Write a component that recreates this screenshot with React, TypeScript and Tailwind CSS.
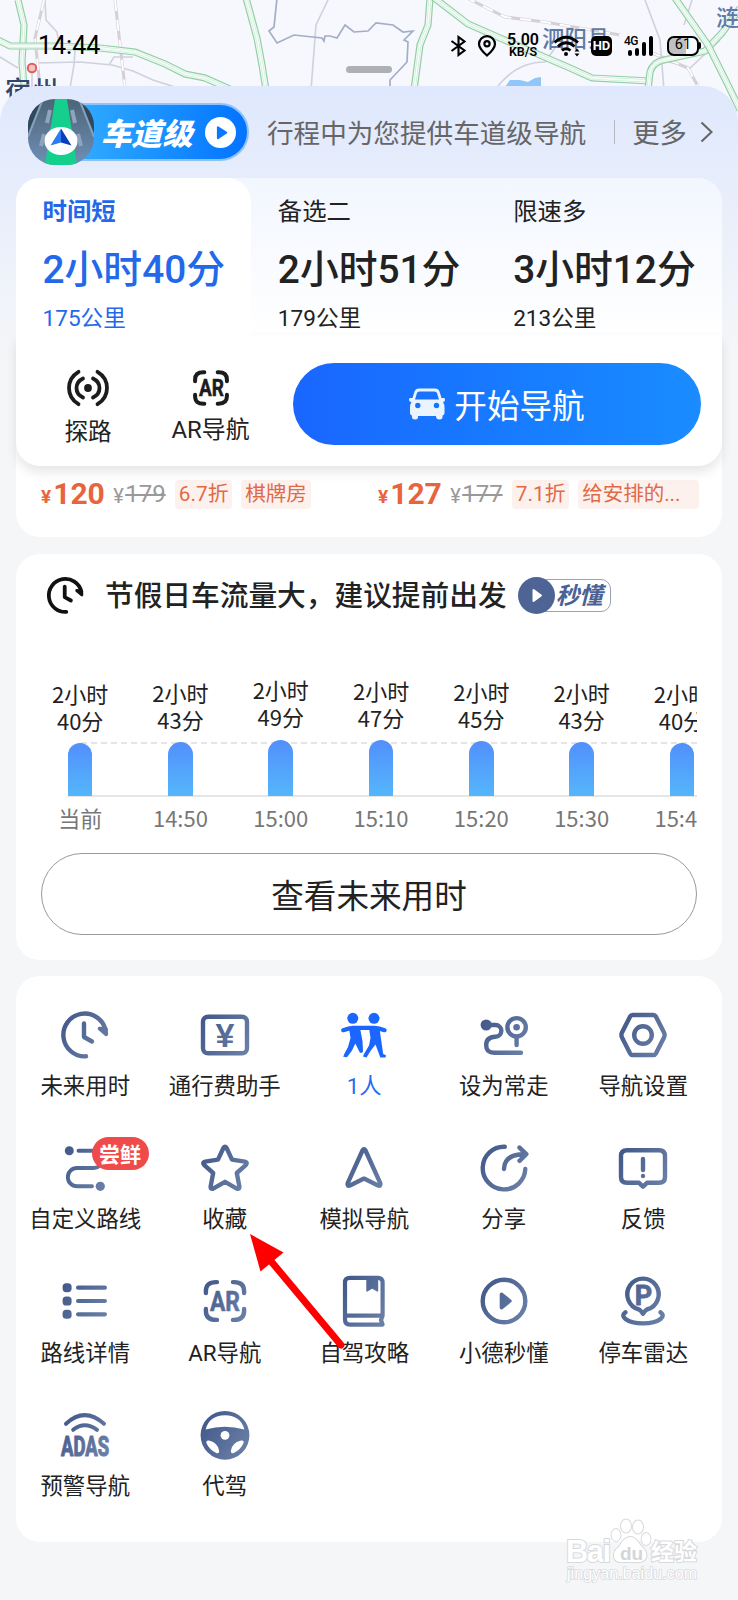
import { ReactNode } from "react";
import clsx from "clsx";

interface RouteOption {
  label: string;
  duration: string;
  distance: string;
}

interface ForecastItem {
  minutes: string;
  time: string;
  height: number;
}

interface ToolItem {
  label: string;
  icon: ReactNode;
  badge?: string;
  active?: boolean;
}

const routes: RouteOption[] = [
  { label: "时间短", duration: "2小时40分", distance: "175公里" },
  { label: "备选二", duration: "2小时51分", distance: "179公里" },
  { label: "限速多", duration: "3小时12分", distance: "213公里" },
];

const forecast: ForecastItem[] = [
  { minutes: "40分", time: "当前", height: 53 },
  { minutes: "43分", time: "14:50", height: 54 },
  { minutes: "49分", time: "15:00", height: 56.5 },
  { minutes: "47分", time: "15:10", height: 56 },
  { minutes: "45分", time: "15:20", height: 55 },
  { minutes: "43分", time: "15:30", height: 54 },
  { minutes: "40分", time: "15:40", height: 53 },
];

const INK = "url(#ink)";

function Glyph({ children, fill }: { children: ReactNode; fill?: boolean }) {
  return (
    <svg
      width="48"
      height="48"
      viewBox="0 0 48 48"
      className="overflow-visible"
      fill={fill ? INK : "none"}
      stroke={fill ? "none" : INK}
      strokeWidth="4.4"
      strokeLinecap="round"
      strokeLinejoin="round"
    >
      {children}
    </svg>
  );
}

function ClockPaths({ color }: { color: string }) {
  return (
    <>
      <path d="M25 45.3A21.4 21.4 0 1 1 44.6 19" />
      <path d="M38.6 17.6 45.2 23.2 44.8 18Z" fill={color} strokeWidth="3.8" />
      <path d="M23 12.5V26L31 30.5" />
    </>
  );
}

function ArFrame() {
  return (
    <path d="M4.9 16V14Q4.9 5.1 15 5.1H16M32 5.1H33Q43.1 5.1 43.1 14V16M43.1 32V34Q43.1 42.9 33 42.9H32M16 42.9H15Q4.9 42.9 4.9 34V32" />
  );
}

const tools: ToolItem[] = [
  {
    label: "未来用时",
    icon: (
      <Glyph>
        <ClockPaths color={INK} />
      </Glyph>
    ),
  },
  {
    label: "通行费助手",
    icon: (
      <Glyph>
        <rect x="2" y="5.7" width="44" height="36.6" rx="5" />
        <text
          x="24"
          y="36"
          textAnchor="middle"
          fill={INK}
          stroke="none"
          className="font-['Liberation_Sans'] text-[34px] font-bold"
        >
          ¥
        </text>
      </Glyph>
    ),
  },
  {
    label: "1人",
    active: true,
    icon: (
      <svg width="48" height="48" viewBox="0 0 48 48" fill="#1a66ff">
        <circle cx="12.8" cy="7.3" r="5.5" />
        <circle cx="34" cy="7.3" r="5.5" />
        <path
          d="M3.2 19.2Q9 17.2 13 16.8H34.5Q39 17.2 44.600 19.200"
          fill="none"
          stroke="#1a66ff"
          strokeWidth="4.2"
          strokeLinecap="round"
        />
        <path d="M9 17H20L22.500 30 23 40.500Q21.500 43 19.500 41L15.300 32.500 12 39.500 7 46.300 3.200 45.700 4.300 43 8 36 10.500 27Z" />
        <path d="M29 17H39.500L41 28 43.200 43 46 44.300 45.500 46.500H40.300L35.500 33.500 30.500 40 26.500 46.500 23 45.500 24 43 29 34.500 30.500 27Z" />
      </svg>
    ),
  },
  {
    label: "设为常走",
    icon: (
      <Glyph>
        <circle cx="6.2" cy="14" r="5.6" fill={INK} stroke="none" />
        <path d="M7 14H15.5A5.8 5.8 0 0 1 15.5 25.7Q6.2 26 6.2 34T14.5 41.8H41" />
        <circle cx="36.6" cy="16.3" r="9.2" />
        <circle cx="36.6" cy="16.3" r="3.3" fill={INK} stroke="none" />
        <path d="M36.6 26V34" />
      </Glyph>
    ),
  },
  {
    label: "导航设置",
    icon: (
      <Glyph>
        <path d="M13.5 4H34.5Q36 4 37 5.7L45 21.5Q46.2 24 45 26.5L37 42.3Q36 44 34.5 44H13.5Q12 44 11 42.3L3 26.5Q1.8 24 3 21.5L11 5.7Q12 4 13.5 4Z" />
        <circle cx="24" cy="24" r="8.8" />
      </Glyph>
    ),
  },
  {
    label: "自定义路线",
    badge: "尝鲜",
    icon: (
      <Glyph>
        <circle cx="8.3" cy="6.7" r="4.5" fill={INK} stroke="none" />
        <path d="M17.5 6.7H33A8.6 8.6 0 0 1 33 24H16A9 9 0 0 0 16 42.3H31" strokeWidth="3.9" />
        <circle cx="39.3" cy="42.3" r="4.6" fill={INK} stroke="none" />
      </Glyph>
    ),
  },
  {
    label: "收藏",
    icon: (
      <Glyph>
        <path d="M22.4 4Q24 1.6 25.6 4L31 15.6 43.8 17.6Q47 18.4 45 20.8L35.8 29 38.4 42.6Q38.6 45.6 35.8 44.6L24 37.8 12.2 44.6Q9.4 45.6 9.6 42.6L12.2 29 3 20.8Q1 18.4 4.2 17.6L17 15.6Z" />
      </Glyph>
    ),
  },
  {
    label: "模拟导航",
    icon: (
      <Glyph>
        <path d="M22.5 6.5Q24 4 25.5 6.5L40.4 39.4Q41 42.6 38 41.4L24 34.6 10 41.4Q7 42.6 7.6 39.4Z" />
      </Glyph>
    ),
  },
  {
    label: "分享",
    icon: (
      <Glyph>
        <path d="M24.8 2.8A21.3 21.3 0 1 0 45.3 25" />
        <path d="M24 25Q24.5 10.3 44 10.2M39.5 3.6 46.3 10.2 39.5 16.8" />
      </Glyph>
    ),
  },
  {
    label: "反馈",
    icon: (
      <Glyph>
        <path d="M8 6.2H40Q46 6.2 46 12V33Q46 38.8 40 38.8H28L24 42.600 20 38.8H8Q2 38.8 2 33V12Q2 6.2 8 6.2Z" />
        <path d="M24 15V26M24 32V32.1" />
      </Glyph>
    ),
  },
  {
    label: "路线详情",
    icon: (
      <Glyph>
        <g fill={INK} stroke="none">
          <rect x="1.6" y="6.2" width="9" height="9" rx="3.6" />
          <rect x="1.6" y="19.5" width="9" height="9" rx="3.6" />
          <rect x="1.6" y="32.8" width="9" height="9" rx="3.6" />
          <rect x="15" y="8.6" width="31" height="4.2" rx="2.1" />
          <rect x="15" y="21.9" width="31" height="4.2" rx="2.1" />
          <rect x="15" y="35.2" width="31" height="4.2" rx="2.1" />
        </g>
      </Glyph>
    ),
  },
  {
    label: "AR导航",
    icon: (
      <Glyph>
        <ArFrame />
        <text
          x="9"
          y="34"
          textLength="30"
          lengthAdjust="spacingAndGlyphs"
          fill={INK}
          stroke={INK}
          strokeWidth=".6"
          className="font-[Roboto] text-[28px] font-bold"
        >
          AR
        </text>
      </Glyph>
    ),
  },
  {
    label: "自驾攻略",
    icon: (
      <Glyph>
        <path d="M42.6 38.7V5.5Q42.6 .8 38 .8H10Q5 .8 5 5.5V42.5Q5 47.6 10 47.6H42.6L41 43 42.6 38.7H6" strokeWidth="4.200" />
        <path d="M27 1H37.5V14L32.2 10.8 27 14Z" fill={INK} strokeWidth="1.4" />
      </Glyph>
    ),
  },
  {
    label: "小德秒懂",
    icon: (
      <Glyph>
        <circle cx="24" cy="24" r="21.3" />
        <path d="M21.4 17.2V30.8L30 24Z" fill={INK} strokeWidth="3.4" />
      </Glyph>
    ),
  },
  {
    label: "停车雷达",
    icon: (
      <Glyph>
        <path d="M20 32.5A15.7 15.7 0 1 1 28 32.5Q26.5 33 24 36.8 21.5 33 20 32.5Z" />
        <path d="M6.5 35.2Q2 38.5 6.5 42 12 46.3 24 46.4 36 46.3 41.5 42 46 38.5 41.5 35.2" />
        <text
          x="24.5"
          y="27.5"
          textAnchor="middle"
          fill={INK}
          stroke={INK}
          strokeWidth=".8"
          className="font-[Roboto] text-[27px] font-bold"
        >
          P
        </text>
      </Glyph>
    ),
  },
  {
    label: "预警导航",
    icon: (
      <Glyph>
        <path d="M5 12.8Q23.5-4.4 43 12.8M12.2 18.8Q23.5 9.8 36 18.8" strokeWidth="4" />
        <text
          x="0"
          y="44.5"
          textLength="48"
          lengthAdjust="spacingAndGlyphs"
          fill={INK}
          stroke={INK}
          strokeWidth="1.200"
          className="font-[Roboto] text-[28px] font-bold"
        >
          ADAS
        </text>
      </Glyph>
    ),
  },
  {
    label: "代驾",
    icon: (
      <Glyph fill>
        <circle cx="24" cy="24.300" r="24.4" />
        <g fill="#fff">
          <path d="M4.6 18.5Q8 4.6 24 4.2 40 4.6 43.4 18.5 24 13 4.6 18.5Z" />
          <circle cx="24" cy="24.300" r="4.4" />
          <path d="M5.400 32Q4.800 29 8 29.500 17.400 32 18.200 40 18.200 43.300 15.200 42 8.400 38.800 5.400 32Z" />
          <path d="M42.600 32Q43.200 29 40 29.500 30.600 32 29.800 40 29.800 43.300 32.800 42 39.600 38.800 42.600 32Z" />
        </g>
      </Glyph>
    ),
  },
];

function MapBackground() {
  const highways = [
    "M18 0 24 25 22 62 26 110",
    "M-2 40 10 46 55 46 100 48 135 52 165 64 185 74 205 78 232 90",
    "M246-2 257 38 262 65 266 90",
    "M430-2 428 25 420 45 414 90",
    "M433-3 468 24 500 38 570 68 592 78 650 81",
    "M648 90 650 72Q653 62 664 60L705 51 722 33 740 8",
    "M675-2 708 45 728 85 740 110",
  ];

  return (
    <svg
      className="absolute inset-x-0 top-0"
      width="738"
      height="130"
      viewBox="0 0 738 130"
      fill="none"
    >
      <rect width="738" height="130" fill="#f6f8fd" />
      <g stroke="#cfd1dc" strokeWidth="1.6">
        <path d="M45 0 46 20 57 32 60 50M0 57 18 68M36 63 80 62 112 65 133 71 153 80 178 88M133 57 114 57 109 65M75 50 74 65 70 88M32 72V110" />
        <path d="M328 0 316 25 311 90M645 0 660 40 664 90M692 0 684 25M495 90Q515 62 545 62L555 48M720 40 690 68 663 60" />
        <path d="M44 0 35 38 40 88M115 0 125 88M465-3 505 17 545 22 620 35M650 52 688 68 700 90" stroke="#d6d0d6" strokeWidth="3" />
        <path d="M44 0 35 38 40 88M115 0 125 88M465-3 505 17 545 22 620 35M650 52 688 68 700 90" stroke="#fff" strokeWidth="1.8" strokeDasharray="11 9" />
      </g>
      <path
        d="M277-2 274 27 269 31 277 43 294 35 322 38 324 41 325 36 330 36 337 38 345 25 354 32 368 31 376 23 393 25 403 32 413 31 404 40 408 42 407 62 390 80V90"
        stroke="#a3aec6"
        strokeWidth="1.7"
      />
      <path d="M503 90 510 80 520 80 528 82 535 78 541 77V90Z" fill="#8fc8f8" />
      {highways.map((d) => (
        <g key={d}>
          <path d={d} stroke="#93cfa6" strokeWidth="7.2" />
          <path d={d} stroke="#f3fbf6" strokeWidth="4.8" />
          <path d={d} stroke="#c5ead0" strokeWidth="2.8" />
          <path d={d} stroke="#f5fbf8" strokeWidth="1.8" />
        </g>
      ))}
      <circle cx="32" cy="68" r="4.2" fill="#f6c3c3" stroke="#dc6060" strokeWidth="2" />
      <g className="font-['Noto_Sans_CJK_SC',sans-serif] font-medium">
        <text x="5" y="100" fill="#33446f" className="text-[26px]" letterSpacing="1">
          宿州
        </text>
        <text x="542" y="47" fill="#5f7aa8" className="text-[22.5px]">
          泗阳县
        </text>
        <text x="716" y="26" fill="#5f7aa8" className="text-[23px]">
          涟
        </text>
      </g>
    </svg>
  );
}

function StatusBar() {
  return (
    <div className="relative flex h-[91px] items-center pl-[38px] pr-[37px] font-[Roboto] text-black">
      <span className="text-[25px] leading-none">14:44</span>
      <div className="ml-auto flex items-center">
        <svg width="17" height="22" viewBox="0 0 17 22" fill="none" stroke="#000" strokeWidth="2.1">
          <path d="M1.5 6 14.5 15.5 8.5 20V2L14.5 6.5 1.5 16" />
        </svg>
        <svg className="ml-[10px]" width="20" height="22" viewBox="0 0 20 22" fill="none" stroke="#000" strokeWidth="2.2">
          <path d="M10 20.5Q2 13.5 2 9A8 7.8 0 0 1 18 9Q18 13.5 10 20.5Z" />
          <circle cx="10" cy="8.8" r="2.6" />
        </svg>
        <div className="ml-[9px] flex w-[34px] flex-col items-center font-semibold leading-none">
          <span className="text-[16px] leading-[13px]">5.00</span>
          <span className="text-[12.5px] leading-[12px]">KB/S</span>
        </div>
        <svg className="ml-[13px]" width="28" height="22" viewBox="0 0 28 22" fill="none" stroke="#000" strokeWidth="2.8">
          <path d="M1.5 7.5Q13-3 25 7.5M5 11.5Q13 4 21.5 11.5M9 15.5Q13 12 17.5 15.5" />
          <circle cx="13" cy="19" r="2" fill="#000" stroke="none" />
          <path d="M21.5 16.5 24 13.5 26.5 16.5ZM21.5 18.5 24 21.5 26.5 18.5Z" fill="#000" stroke="none" />
        </svg>
        <span className="ml-[10px] flex h-[20px] w-[21px] items-center justify-center rounded-[5px] bg-black text-[13px] font-bold leading-none text-white">
          HD
        </span>
        <div className="ml-[12px] flex h-[21px] w-[31px] items-end gap-[3.5px] pl-[4px]">
          <span className="-ml-[4px] mb-[9px] w-[13px] text-[12px] font-medium leading-none tracking-tighter">
            4G
          </span>
          <span className="-ml-[12.5px] h-[6px] w-[3.5px] rounded-full bg-black" />
          <span className="h-[8px] w-[3.5px] rounded-full bg-black" />
          <span className="h-[14px] w-[3.5px] rounded-full bg-black" />
          <span className="h-[20px] w-[3.5px] rounded-full bg-black" />
        </div>
        <span className="ml-[12px] flex h-[20px] w-[32px] items-center justify-center rounded-[7px] border-2 border-black bg-linear-to-r from-[#bfc0c4] from-60% to-[#f6f8fd] to-60% text-[14.5px] leading-none">
          61
        </span>
        <span className="h-[7px] w-[2px] rounded-r bg-black" />
      </div>
    </div>
  );
}

function LaneBanner() {
  return (
    <div className="flex h-[66px] items-center pl-[28px] pr-[25px]">
      <div className="relative z-10 size-[66px] shrink-0">
        <svg width="66" height="66" viewBox="0 0 66 66">
          <defs>
            <clipPath id="lane">
              <rect width="66" height="66" rx="27" />
            </clipPath>
            <linearGradient id="road" x1="0" y1="0" x2="0" y2="1">
              <stop offset="0" stopColor="#4d6478" />
              <stop offset="1" stopColor="#6f8fb6" />
            </linearGradient>
          </defs>
          <g clipPath="url(#lane)">
            <rect width="66" height="66" fill="url(#road)" />
            <path d="M0 0H14L0 34ZM66 0H52L66 34Z" fill="#2f4a5c" />
            <path d="M15 0 0 38M51 0 66 38" stroke="#86a1bb" strokeWidth="2" />
            <path d="M22 11 19 24M16 35 13 47M44 11 47 24M50 35 53 47M10 60 8 66M56 60 58 66" stroke="#8fa5bc" strokeWidth="4" />
            <path d="M27 0H39L49 66H17Z" fill="#14d08c" />
          </g>
          <ellipse cx="33" cy="42" rx="16.500" ry="14" fill="#fff" />
          <path d="M33 29.500 43.500 46.500 33 43.500Z" fill="#0a3fb8" />
          <path d="M33 29.500 22.500 46.500 33 43.500Z" fill="#2b7cf5" />
        </svg>
      </div>
      <div className="-ml-[34px] flex h-[58px] w-[189px] items-center rounded-r-full border-[2.500px] border-[#8cc3ff] bg-linear-to-r from-[#35b0ff] to-[#0572ff] pl-[39px]">
        <span className="text-[30.5px] font-black italic leading-none text-white">车道级</span>
        <svg className="ml-[12px]" width="31" height="31" viewBox="0 0 30 30">
          <circle cx="15" cy="15" r="15" fill="#fff" />
          <path d="M12.5 10V20.5L20.5 15.2Z" fill="#0b78ff" stroke="#0b78ff" strokeWidth="2" strokeLinejoin="round" />
        </svg>
      </div>
      <span className="ml-[18px] whitespace-nowrap text-[26.6px] leading-none text-[#666]">
        行程中为您提供车道级导航
      </span>
      <span className="ml-[28px] h-[24px] w-px bg-[#b5b9c4]" />
      <span className="ml-[17px] whitespace-nowrap text-[27.3px] leading-none text-[#666]">更多</span>
      <svg className="ml-[13px]" width="13" height="22" viewBox="0 0 13 22" fill="none" stroke="#666" strokeWidth="2.1">
        <path d="M1.5 1.5 11.5 11 1.5 20.5" />
      </svg>
    </div>
  );
}

function RouteTabs() {
  return (
    <div className="flex h-[157px] rounded-t-[24px] bg-linear-to-b from-[#f2f6fe] to-white">
      {routes.map((route, index) => (
        <div
          key={route.label}
          className={clsx(
            "flex flex-1 flex-col whitespace-nowrap pl-[26.500px] pt-[16px]",
            index === 0 ? "rounded-t-[24px] bg-white text-[#2468ea]" : "text-[#222]"
          )}
        >
          <span className={clsx("text-[24.4px] leading-[32px]", index === 0 && "font-bold")}>
            {route.label}
          </span>
          <span className="mt-[19px] font-[Roboto,'Noto_Sans_CJK_SC',sans-serif] text-[38.8px] font-medium leading-[50px]">
            {route.duration}
          </span>
          <span className="mt-[9px] font-[Roboto,'Noto_Sans_CJK_SC',sans-serif] text-[22.6px] leading-[30px]">
            {route.distance}
          </span>
        </div>
      ))}
    </div>
  );
}

function RouteActions() {
  return (
    <div className="flex h-[131px] items-start rounded-b-[24px] bg-white pl-[48px] pr-[21px] pt-[28px] text-[#222] shadow-[0_6px_12px_rgba(0,0,0,0.10)]">
      <div className="flex w-[48px] flex-col items-center pt-[5px]">
        <svg width="44" height="40" viewBox="0 0 44 40" fill="none" stroke="#1c1c1c" strokeWidth="3.8" strokeLinecap="round">
          <circle cx="22" cy="20" r="3.9" fill="#1c1c1c" stroke="none" />
          <path d="M12.5 3.8Q3 9.5 3 20T12.5 36.2M31.5 3.8Q41 9.5 41 20T31.5 36.2M17 10.5Q10.5 13.5 10.5 20T17 29.5M27 10.5Q33.5 13.5 33.5 20T27 29.5" />
        </svg>
        <span className="mt-[5px] whitespace-nowrap text-[23.6px] leading-[34px]">探路</span>
      </div>
      <div className="ml-[57.500px] flex w-[82px] flex-col items-center pt-[5px]">
        <svg width="40" height="40" viewBox="0 0 48 48" fill="none" stroke="#1c1c1c" strokeWidth="4.8" strokeLinecap="round">
          <ArFrame />
          <text
            x="9.500"
            y="34"
            textLength="30"
            lengthAdjust="spacingAndGlyphs"
            fill="#1c1c1c"
            stroke="#1c1c1c"
            strokeWidth=".6"
            className="font-[Roboto] text-[28px] font-bold"
          >
            AR
          </text>
        </svg>
        <span className="mt-[5px] whitespace-nowrap font-[Roboto,'Noto_Sans_CJK_SC',sans-serif] text-[23.9px] leading-[34px]">
          AR导航
        </span>
      </div>
      <button className="ml-auto flex h-[82px] w-[408px] items-center justify-center rounded-full bg-linear-to-r from-[#1a66ff] to-[#1a8cff] text-white">
        <svg width="36" height="32" viewBox="0 0 36 32">
          <path
            fillRule="evenodd"
            fill="#eaf4ff"
            d="M10 .5H26Q29.5 .5 30.5 3.5L32.5 10H35Q36 10 36 11.5 36 14 34 14 35.5 16 35.5 20V25Q35.5 27 33.5 27.5V29Q33.5 31.5 30.5 31.5T27 29V28H9V29Q9 31.5 6 31.5T3 29V27.5Q1 27 1 25V20Q1 16 2.5 14 0 14 0 11.5 0 10 1 10H3.5L5.5 3.5Q6.5 .5 10 .5ZM10.5 3.5Q8.5 3.5 8 5L6 11.5H30L28 5Q27.5 3.5 25.5 3.5ZM8.8 14.8A2.7 2.7 0 1 0 8.8 20.2 2.7 2.7 0 1 0 8.8 14.8ZM27.5 14.8A2.7 2.7 0 1 0 27.5 20.2 2.7 2.7 0 1 0 27.5 14.8Z"
          />
        </svg>
        <span className="ml-[9px] text-[32.6px] leading-none">开始导航</span>
      </button>
    </div>
  );
}

interface DealProps {
  price: string;
  original: string;
  discount: string;
  tag: string;
  wide?: boolean;
}

function Deal({ price, original, discount, tag, wide }: DealProps) {
  return (
    <div className="flex w-[337px] items-center whitespace-nowrap font-[Roboto,'Noto_Sans_CJK_SC',sans-serif] leading-none">
      <span className="mt-[5px] text-[19px] font-bold text-[#e8643c]">¥</span>
      <span className="ml-[2px] w-[52px] text-[30px] font-bold text-[#e8643c]">{price}</span>
      <span className="ml-[8px] mt-[4px] w-[12px] text-[20px] text-[#999]">¥</span>
      <span className="w-[41px] text-[24px] text-[#999] line-through decoration-[1.5px]">{original}</span>
      <span className="ml-[9px] flex h-[29px] w-[57px] items-center justify-center rounded bg-[#fdf1ed] text-[20.8px] text-[#df6a48]">
        {discount}
      </span>
      <span
        className={clsx(
          "ml-[9px] flex h-[29px] items-center rounded bg-[#fdf1ed] pl-[4px] text-[20.5px] text-[#df6a48]",
          wide ? "w-[121px]" : "w-[70px]"
        )}
      >
        {tag}
      </span>
    </div>
  );
}

function FutureDuration() {
  return (
    <section className="mt-[17px] h-[406px] rounded-[24px] bg-white px-[25px]">
      <div className="flex h-[82px] items-center">
        <svg
          className="ml-[6px] overflow-visible"
          width="37"
          height="37"
          viewBox="0 0 48 48"
          fill="none"
          stroke="#111"
          strokeWidth="4.9"
          strokeLinecap="round"
          strokeLinejoin="round"
        >
          <ClockPaths color="#111" />
        </svg>
        <h2 className="-mt-[2px] ml-[21px] whitespace-nowrap text-[28.7px] font-medium leading-none text-[#222]">
          节假日车流量大，建议提前出发
        </h2>
        <div className="ml-[11px] flex items-center">
          <svg className="relative z-10" width="37" height="37" viewBox="0 0 37 37">
            <circle cx="18.5" cy="18.5" r="18.5" fill="#4d6495" />
            <path d="M15.5 13V24L23 18.5Z" fill="#fff" stroke="#fff" strokeWidth="2" strokeLinejoin="round" />
          </svg>
          <span className="-ml-[12px] flex h-[33px] w-[68px] items-center rounded-r-[10px] border border-[#9aa1b5] pl-[12px] text-[23.5px] font-bold italic leading-none text-[#4a6193]">
            秒懂
          </span>
        </div>
      </div>

      <div className="relative mt-[32px] h-[166px] overflow-hidden">
        <div className="absolute left-[40px] right-0 top-[74px] border-t-2 border-dashed border-[#e4e5e7]" />
        <div className="absolute left-[27px] right-0 top-[127px] h-[2px] bg-[#e3e5e8]" />
        <div className="relative -ml-[11px] flex w-[704px]">
          {forecast.map((item, index) => (
            <div key={index} className="flex w-[100.3px] shrink-0 flex-col items-center">
              <div className="flex h-[128px] flex-col items-center justify-end">
                <span className="whitespace-nowrap text-center text-[22px] leading-[27px] text-[#222]">
                  2小时
                  <br />
                  {item.minutes}
                </span>
                <span
                  className="mt-[9.500px] w-[24.5px] rounded-t-full bg-linear-to-b from-[#528ffc] to-[#55b6fb]"
                  style={{ height: item.height }}
                />
              </div>
              <span className="mt-[5px] text-[22px] leading-[32px] text-[#777]">{item.time}</span>
            </div>
          ))}
        </div>
      </div>

      <button className="mt-[19px] flex h-[82px] w-full items-center justify-center rounded-full border border-[#999] text-[32.6px] leading-none text-[#222]">
        查看未来用时
      </button>
    </section>
  );
}

function ToolGrid() {
  return (
    <section className="mt-[16px] h-[566px] rounded-[24px] bg-white pt-[34.500px]">
      <div className="-ml-[0.500px] grid grid-cols-[repeat(5,139.5px)] auto-rows-[133.4px]">
        {tools.map((tool) => (
          <div key={tool.label} className="relative flex flex-col items-center">
            {tool.icon}
            {tool.badge && (
              <span className="absolute left-[76px] top-[-7px] flex h-[33px] w-[57px] items-center justify-center rounded-full bg-[#ef4b4b] text-[21px] font-bold leading-none text-white">
                {tool.badge}
              </span>
            )}
            <span
              className={clsx(
                "mt-[11.500px] whitespace-nowrap font-[Roboto,'Noto_Sans_CJK_SC',sans-serif] text-[22.4px] leading-[32px]",
                tool.active ? "text-[#2a6cf0]" : "text-[#222]"
              )}
            >
              {tool.label}
            </span>
          </div>
        ))}
      </div>
    </section>
  );
}

function Watermark() {
  return (
    <svg
      className="absolute left-[560px] top-[1514px]"
      width="150"
      height="74"
      viewBox="560 1514 150 74"
      fill="#fff"
      stroke="#d8d9dc"
      strokeWidth="2"
      paintOrder="stroke"
    >
      <text x="566" y="1562" className="font-['Liberation_Sans'] text-[31px] font-bold" textLength="45">
        Bai
      </text>
      <ellipse cx="616" cy="1535" rx="4.5" ry="6" />
      <ellipse cx="626" cy="1526" rx="5" ry="6.5" />
      <ellipse cx="638" cy="1527" rx="5" ry="6.5" />
      <ellipse cx="646" cy="1539" rx="4.5" ry="6" />
      <path d="M630 1537Q636 1537 641 1546 648 1552 646 1558 643 1563 636 1562H624Q615 1563 614 1557 613 1551 619 1547 624 1537 630 1537Z" />
      <text x="620" y="1560" fill="#d4d5d9" stroke="none" className="font-['Liberation_Sans'] text-[19px] font-bold">
        du
      </text>
      <text x="651" y="1560" className="font-['Noto_Sans_CJK_SC',sans-serif] text-[23px] font-bold">
        经验
      </text>
      <text x="567" y="1579" strokeWidth="1.5" textLength="130" className="font-['Liberation_Sans'] text-[16px]">
        jingyan.baidu.com
      </text>
    </svg>
  );
}

export default function App() {
  return (
    <main className="relative h-[1600px] w-[738px] overflow-hidden bg-[#f5f6f8] font-['Noto_Sans_CJK_SC',sans-serif]">
      <svg className="absolute size-0">
        <defs>
          <linearGradient id="ink" gradientUnits="userSpaceOnUse" x1="2" y1="10" x2="46" y2="38">
            <stop offset="0" stopColor="#435a8b" />
            <stop offset="1" stopColor="#6a7fa6" />
          </linearGradient>
        </defs>
      </svg>

      {/* Map peeking out above the sheet */}
      <header className="relative h-[86px]">
        <MapBackground />
        <StatusBar />
        <span className="absolute left-[346px] top-[66px] h-[7px] w-[46px] rounded-full bg-[#aeb0b6]" />
      </header>

      <div className="relative h-[1514px] rounded-t-[36px] bg-[#f5f6f8] bg-linear-to-b from-[#dfe8fd] to-[#f5f6f8] to-[270px] pt-[13px]">
        <LaneBanner />

        <div className="mx-[16px] mt-[13px]">
          <div className="relative z-10">
            <RouteTabs />
            <RouteActions />
          </div>

          <section className="-mt-[25px] flex h-[96px] items-end rounded-b-[24px] bg-white pb-[28px] pl-[25px]">
            <Deal price="120" original="179" discount="6.7折" tag="棋牌房" />
            <Deal price="127" original="177" discount="7.1折" tag="给安排的..." wide />
          </section>

          <FutureDuration />
          <ToolGrid />
        </div>
      </div>

      {/* Pointer to the favourite button */}
      <svg className="absolute left-[245px] top-[1230px]" width="105" height="120" viewBox="245 1230 105 120">
        <path d="M341 1345 270 1260" stroke="#f00" strokeWidth="7" strokeLinecap="round" />
        <path d="M250 1234 283.5 1252.5 260.5 1271.5Z" fill="#f00" />
      </svg>
      <Watermark />
    </main>
  );
}
